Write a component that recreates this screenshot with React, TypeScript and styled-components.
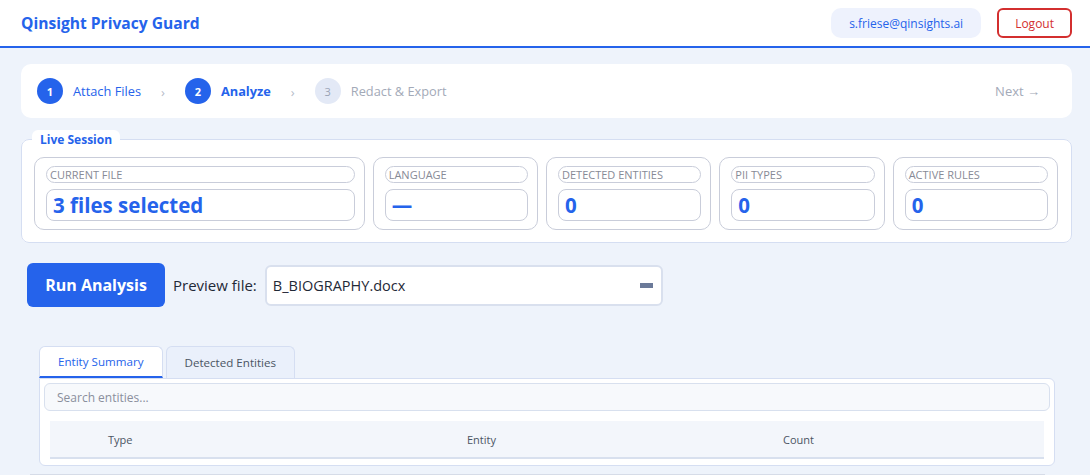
import React from "react";
import styled, { createGlobalStyle } from "styled-components";

const Global = createGlobalStyle`
  * { box-sizing: border-box; }
  html, body { margin: 0; padding: 0; }
  body {
    background: #eef3fb;
    font-family: "Open Sans", "Noto Sans", Arial, sans-serif;
    color: #1f2937;
  }
`;

const Header = styled.header`
  height: 48px;
  background: #ffffff;
  border-bottom: 2px solid #2563eb;
  display: flex;
  align-items: center;
  justify-content: space-between;
  padding: 0 18px 0 21px;
`;

const Brand = styled.div`
  font-size: 15.6px;
  font-weight: 700;
  color: #2563eb;
`;

const HeaderRight = styled.div`
  display: flex;
  align-items: center;
  gap: 16px;
`;

const EmailPill = styled.div`
  height: 30px;
  padding: 0 18px;
  display: flex;
  align-items: center;
  border-radius: 10px;
  background: #eef2fd;
  color: #2563eb;
  font-size: 12px;
`;

const LogoutButton = styled.button`
  height: 30px;
  padding: 0 16px;
  border: 2px solid #d32f2f;
  border-radius: 6px;
  background: #fff;
  color: #d32f2f;
  font-family: inherit;
  font-size: 12px;
`;

const Main = styled.main`
  padding: 16px 18px 0 21px;
`;

const StepperCard = styled.div`
  height: 54px;
  background: #fff;
  border-radius: 10px;
  display: flex;
  align-items: center;
  padding: 0 32px 0 16px;
`;

const Step = styled.div`
  display: flex;
  align-items: center;
  gap: 10px;
`;

const StepCircle = styled.div<{ $active: boolean }>`
  width: 26px;
  height: 26px;
  border-radius: 50%;
  display: flex;
  align-items: center;
  justify-content: center;
  font-size: 11px;
  font-weight: ${(p) => (p.$active ? 700 : 400)};
  background: ${(p) => (p.$active ? "#2563eb" : "#e3e9f6")};
  color: ${(p) => (p.$active ? "#fff" : "#9aa3b5")};
`;

const StepLabel = styled.span<{ $state: "done" | "current" | "todo" }>`
  font-size: 12.8px;
  font-weight: ${(p) => (p.$state === "current" ? 700 : 400)};
  color: ${(p) => (p.$state === "todo" ? "#a3aab8" : "#2563eb")};
`;

const Chevron = styled.span`
  color: #b6bcc9;
  font-size: 13px;
  margin: 2px 20px 0 20px;
`;

const NextLink = styled.span`
  margin-left: auto;
  color: #a3aab8;
  font-size: 13px;
`;

const SessionFieldset = styled.fieldset`
  margin: 12px 0 0 0;
  padding: 9px 13px 12px 12px;
  border: 1px solid #d5def2;
  border-radius: 8px;
  background: #fff;
  min-width: 0;
`;

const Legend = styled.legend`
  background: #fff;
  border-radius: 6px 6px 0 0;
  padding: 1px 8px 0 8px;
  margin-left: -2px;
  font-size: 12px;
  font-weight: 700;
  color: #2563eb;
`;

const StatsGrid = styled.div`
  display: grid;
  grid-template-columns: 2fr 1fr 1fr 1fr 1fr;
  gap: 8px;
`;

const StatCard = styled.div`
  border: 1px solid #c9cdda;
  border-radius: 10px;
  padding: 8px 9px 8px 11px;
  display: flex;
  flex-direction: column;
  gap: 6px;
`;

const StatLabel = styled.div`
  height: 17px;
  border: 1px solid #c9cdda;
  border-radius: 10px;
  padding: 0 3px;
  display: flex;
  align-items: center;
  font-size: 11px;
  color: #878a96;
  text-transform: uppercase;
`;

const StatValue = styled.div`
  height: 32px;
  border: 1px solid #c9cdda;
  border-radius: 8px;
  padding: 0 6px;
  display: flex;
  align-items: center;
  font-size: 20.5px;
  font-weight: 700;
  color: #2563eb;
`;

const ActionRow = styled.div`
  display: flex;
  align-items: center;
  gap: 8px;
  margin: 20px 0 0 6px;
`;

const RunButton = styled.button`
  height: 44px;
  width: 138px;
  border: none;
  border-radius: 6px;
  background: #2563eb;
  color: #fff;
  font-family: inherit;
  font-size: 16px;
  font-weight: 700;
`;

const PreviewLabel = styled.label`
  font-size: 15px;
  color: #1f2937;
`;

const SelectBox = styled.div`
  width: 398px;
  height: 41px;
  background: #fff;
  border: 2px solid #d9e0ee;
  border-radius: 6px;
  display: flex;
  align-items: center;
  justify-content: space-between;
  padding: 0 6px 0 6px;
  font-size: 14.5px;
  color: #1f2937;
`;

const SelectGlyph = styled.span`
  width: 13px;
  height: 5px;
  background: #6b7a99;
  margin-right: 2px;
`;

const TabsArea = styled.section`
  margin: 39px 17px 0 18px;
`;

const TabList = styled.div`
  display: flex;
  gap: 3px;
`;

const Tab = styled.div<{ $active: boolean }>`
  height: 32px;
  padding: 0 18px;
  display: flex;
  align-items: center;
  border: 1px solid #d5def2;
  border-bottom: ${(p) => (p.$active ? "2px solid #2563eb" : "none")};
  border-radius: 6px 6px 0 0;
  background: ${(p) => (p.$active ? "#fff" : "#eaf0fb")};
  color: ${(p) => (p.$active ? "#2563eb" : "#4b5563")};
  font-size: 11.6px;
`;

const TabPanel = styled.div`
  background: #fff;
  border: 1px solid #d5def2;
  border-radius: 0 6px 6px 6px;
  padding: 4px 4px 6px 4px;
`;

const SearchInput = styled.input`
  width: 100%;
  height: 28px;
  border: 1px solid #d8e0ee;
  border-radius: 6px;
  background: #f7f9fc;
  padding: 0 12px;
  font-family: inherit;
  font-size: 12px;
  color: #1f2937;
  &::placeholder { color: #8a8f9c; }
`;

const TableHead = styled.div`
  display: grid;
  grid-template-columns: 359px 316px 1fr;
  margin: 10px 6px 0 6px;
  height: 38px;
  background: #f3f6fb;
  border-bottom: 2px solid #d8e0ee;
`;

const HeadCell = styled.div`
  display: flex;
  align-items: center;
  padding-left: 58px;
  font-size: 11px;
  color: #4b5563;
`;

const NextSection = styled.div`
  margin: 8px 27px 0 9px;
  border-top: 1px solid #d6dce8;
`;

const stats = [
  { label: "Current File", value: "3 files selected" },
  { label: "Language", value: "—" },
  { label: "Detected Entities", value: "0" },
  { label: "PII Types", value: "0" },
  { label: "Active Rules", value: "0" },
];

export default function App() {
  return (
    <>
      <Global />
      <Header>
        <Brand>Qinsight Privacy Guard</Brand>
        <HeaderRight>
          <EmailPill>s.friese@qinsights.ai</EmailPill>
          <LogoutButton>Logout</LogoutButton>
        </HeaderRight>
      </Header>
      <Main>
        <StepperCard>
          <Step>
            <StepCircle $active>1</StepCircle>
            <StepLabel $state="done">Attach Files</StepLabel>
          </Step>
          <Chevron>›</Chevron>
          <Step>
            <StepCircle $active>2</StepCircle>
            <StepLabel $state="current">Analyze</StepLabel>
          </Step>
          <Chevron>›</Chevron>
          <Step>
            <StepCircle $active={false}>3</StepCircle>
            <StepLabel $state="todo">Redact &amp; Export</StepLabel>
          </Step>
          <NextLink>Next →</NextLink>
        </StepperCard>

        <SessionFieldset>
          <Legend>Live Session</Legend>
          <StatsGrid>
            {stats.map((s) => (
              <StatCard key={s.label}>
                <StatLabel>{s.label}</StatLabel>
                <StatValue>{s.value}</StatValue>
              </StatCard>
            ))}
          </StatsGrid>
        </SessionFieldset>

        <ActionRow>
          <RunButton>Run Analysis</RunButton>
          <PreviewLabel>Preview file:</PreviewLabel>
          <SelectBox>
            <span>B_BIOGRAPHY.docx</span>
            <SelectGlyph />
          </SelectBox>
        </ActionRow>

        <TabsArea>
          <TabList>
            <Tab $active>Entity Summary</Tab>
            <Tab $active={false}>Detected Entities</Tab>
          </TabList>
          <TabPanel>
            <SearchInput placeholder="Search entities..." />
            <TableHead>
              <HeadCell>Type</HeadCell>
              <HeadCell>Entity</HeadCell>
              <HeadCell>Count</HeadCell>
            </TableHead>
          </TabPanel>
        </TabsArea>
        <NextSection />
      </Main>
    </>
  );
}
